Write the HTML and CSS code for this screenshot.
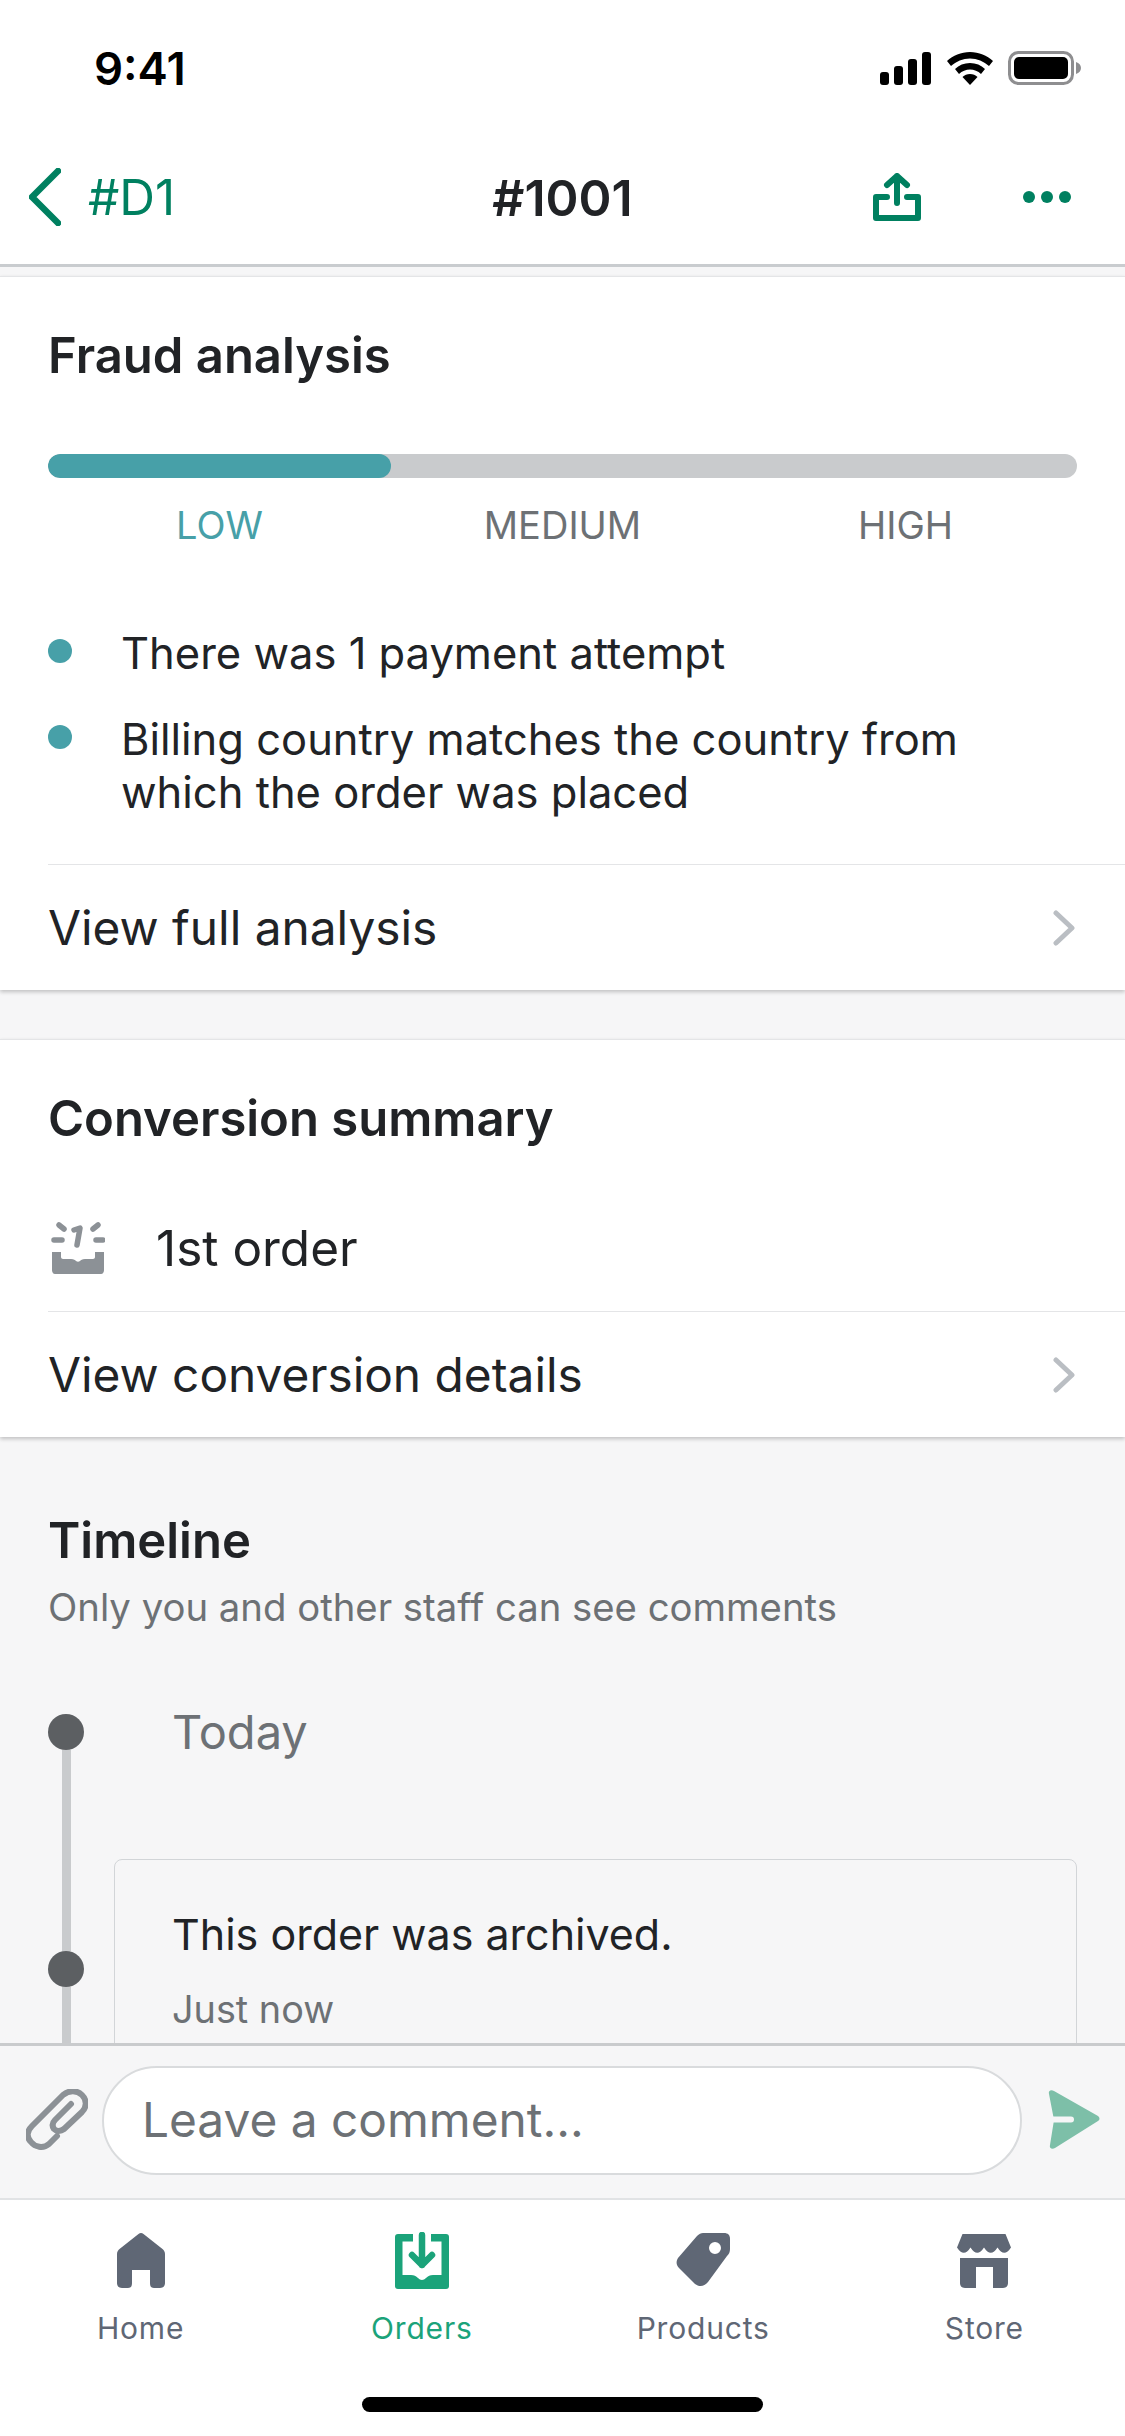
FILE: index.html
```html
<!DOCTYPE html>
<html lang="en">
<head>
  <meta charset="UTF-8">
  <meta name="viewport" content="width=device-width, initial-scale=1.0">
  <title>Order #1001</title>
  <link rel="stylesheet" href="styles.css">
</head>
<body>
  <div class="app">
    <!-- Status bar -->
    <div class="status-bar">
      <span class="time">9:41</span>
      <div class="status-icons">
        <svg width="52" height="33" viewBox="0 0 52 33"><rect x="0" y="20" width="9" height="13" rx="3"/><rect x="14" y="14" width="9" height="19" rx="3"/><rect x="28" y="7" width="9" height="26" rx="3"/><rect x="42" y="0" width="9" height="33" rx="3"/></svg>
        <svg width="46" height="33" viewBox="0 0 46 33"><path d="M23 0c9 0 17 3.500 23 9l-4 5c-5-4.500-12-7.500-19-7.500S9 9.500 4 14L0 9C6 3.500 14 0 23 0z"/><path d="M23 11c6 0 11 2 15 6l-4 5c-3-3-7-4.500-11-4.500S15 19 12 22l-4-5c4-4 9-6 15-6z"/><path d="M23 22c3 0 5.500 1 7.500 3L23 33l-7.500-8c2-2 4.500-3 7.500-3z"/></svg>
        <svg width="74" height="34" viewBox="0 0 74 34"><rect x="1.500" y="1.500" width="63" height="31" rx="9" fill="none" stroke="#8e8e90" stroke-width="3"/><rect x="6" y="6" width="54" height="22" rx="5"/><path d="M68 11c3 1 5 3 5 6s-2 5-5 6z" fill="#8e8e90"/></svg>
      </div>
    </div>

    <!-- Nav bar -->
    <header class="nav-bar">
      <div class="nav-back">
        <svg width="32" height="58" viewBox="0 0 32 58" fill="none" stroke="#008060" stroke-width="6.500" stroke-linecap="round" stroke-linejoin="round"><path d="M29 3L3 29l26 26"/></svg>
        <span>#D1</span>
      </div>
      <h1 class="nav-title">#1001</h1>
      <div class="nav-actions">
        <svg width="48" height="48" viewBox="0 0 48 48" fill="none" stroke="#008060" stroke-width="6" stroke-linecap="round" stroke-linejoin="round"><path d="M24 30V3M14 12l10-9 10 9"/><path d="M14 24H3v21h42V24H34"/></svg>
        <svg width="48" height="12" viewBox="0 0 48 12" fill="#008060"><circle cx="6" cy="6" r="6"/><circle cx="24" cy="6" r="6"/><circle cx="42" cy="6" r="6"/></svg>
      </div>
    </header>

    <main class="content">
      <!-- Fraud analysis -->
      <section class="card">
        <h2 class="card-title">Fraud analysis</h2>
        <div class="risk-bar"><div class="risk-fill"></div></div>
        <div class="risk-labels">
          <span class="risk-active">LOW</span>
          <span>MEDIUM</span>
          <span>HIGH</span>
        </div>
        <ul class="risk-list">
          <li>There was 1 payment attempt</li>
          <li>Billing country matches the country from which the order was placed</li>
        </ul>
        <div class="link-row">
          <span>View full analysis</span>
          <svg class="chevron" width="22" height="36" viewBox="0 0 22 36" fill="none" stroke="#babec3" stroke-width="5" stroke-linecap="round" stroke-linejoin="round"><path d="M3 3l16 15L3 33"/></svg>
        </div>
      </section>

      <!-- Conversion summary -->
      <section class="card card-second">
        <h2 class="card-title">Conversion summary</h2>
        <div class="order-row">
          <svg width="54" height="52" viewBox="0 0 54 52" fill="#8c9196"><path d="M1 30h9v5c0 1 1 2 2 2h8c3 0 4 1 5 2 1.500 1 2.500 1 4 0 1-1 2-2 5-2h8c1 0 2-1 2-2v-5h9v18c0 2-1 4-3 4H4c-2 0-3-2-3-4z"/><g fill="none" stroke="#8c9196" stroke-width="5.500" stroke-linecap="round" stroke-linejoin="round"><path d="M3 18h8M45 18h7M8 3l5 4M47 3l-5 4"/><path d="M23 8l6-2-3 17"/></g></svg>
          <span>1st order</span>
        </div>
        <div class="link-row">
          <span>View conversion details</span>
          <svg class="chevron" width="22" height="36" viewBox="0 0 22 36" fill="none" stroke="#babec3" stroke-width="5" stroke-linecap="round" stroke-linejoin="round"><path d="M3 3l16 15L3 33"/></svg>
        </div>
      </section>

      <!-- Timeline -->
      <section class="timeline">
        <h2 class="card-title">Timeline</h2>
        <p class="timeline-note">Only you and other staff can see comments</p>
        <div class="timeline-body">
          <div class="rail">
            <div class="rail-dot"></div>
            <div class="rail-line rail-line-first"></div>
            <div class="rail-dot"></div>
            <div class="rail-line"></div>
          </div>
          <div class="timeline-events">
            <div class="timeline-day">Today</div>
            <div class="event">
              <div class="event-text">This order was archived.</div>
              <div class="event-time">Just now</div>
            </div>
          </div>
        </div>
      </section>
    </main>

    <!-- Comment box -->
    <div class="composer">
      <svg width="62" height="62" viewBox="27 20 62 62" fill="none" stroke="#8c9196" stroke-width="6" stroke-linecap="round" stroke-linejoin="round"><path d="M58 67l-8 8c-6 5-14 3-18-2-5-5-4-11 1-16l31-31c6-5 14-5 19 0s5 12 0 17L65 60c-4 3-8 2-10 0-2-3-2-6 1-9l16-16"/></svg>
      <div class="comment-input">Leave a comment...</div>
      <svg width="54" height="62" viewBox="19 19 54 62"><path d="M20 24c-1-3 2-5 5-3l44 25c2 1.500 2 4 0 5L26 78c-3 2-6 0-5-3l4-25z" fill="#7dbfa8"/><path d="M23 49.500h19" stroke="#f6f6f7" stroke-width="6" stroke-linecap="round"/></svg>
    </div>

    <!-- Tab bar -->
    <nav class="tab-bar">
      <div class="tab">
        <svg width="48" height="55" viewBox="0 0 48 55" fill="#5f6775"><path d="M21.500 1c1.500-1.300 3.500-1.300 5 0l19 15c1.500 1.200 2.500 3 2.500 5v29c0 3-2 5-5 5h-6c-3 0-4-2-4-5V37H15v13c0 3-1 5-4 5H5c-3 0-5-2-5-5V21c0-2 1-3.800 2.500-5z"/></svg>
        <span>Home</span>
      </div>
      <div class="tab tab-active">
        <svg width="54" height="57" viewBox="0 0 54 57" fill="#1ba37a"><path d="M3 2h15v7.500H7.500V43H16c3 0 5 1 7 3 2.500 2.500 5.500 2.500 8 0 2-2 4-3 7-3h8.500V9.500H36V2h15c2 0 3 1 3 3v49c0 2-1 3-3 3H3c-2 0-3-1-3-3V5c0-2 1-3 3-3z"/><path d="M27 3v30M17 23l10 10 10-10" fill="none" stroke="#1ba37a" stroke-width="6.500" stroke-linecap="round" stroke-linejoin="round"/></svg>
        <span>Orders</span>
      </div>
      <div class="tab">
        <svg width="54" height="55" viewBox="17 14 54 55" fill="#5f6775" fill-rule="evenodd"><path d="M44 14h21c4 0 6 2 6 6v10c0 3-1 5-3 7L49 63c-4 5-9 5-13 2L20 49c-3-3-3-7-1-10l19-22c2-2 4-3 6-3zM56 23a6 6 0 1 0 0 12 6 6 0 0 0 0-12z"/></svg>
        <span>Products</span>
      </div>
      <div class="tab">
        <svg width="54" height="55" viewBox="0 0 54 55" fill="#5f6775"><path d="M5.500 1h43L54 14.500Q47.250 25 40.500 14.500 33.750 25 27 14.500 20.250 25 13.500 14.500 6.750 25 0 14.500z"/><path d="M3 25h48v25c0 3-2 5-5 5H36V34H19v21H8c-3 0-5-2-5-5z"/></svg>
        <span>Store</span>
      </div>
      <div class="home-indicator"></div>
    </nav>
  </div>
</body>
</html>
```
FILE: styles.css
```css
/* General Styles */
* {
  box-sizing: border-box;
}

body {
  margin: 0;
  background: #ffffff;
  color: #212326;
  font-family: Inter, "Liberation Sans", sans-serif;
}

.app {
  display: flex;
  flex-direction: column;
  width: 1125px;
  height: 2436px;
  overflow: hidden;
}

/* Status bar */
.status-bar {
  display: flex;
  justify-content: space-between;
  align-items: center;
  height: 136px;
  padding: 0 43px 0 94px;
  flex-shrink: 0;
}

.time {
  font-size: 45.5px;
  font-weight: 600;
  color: #000000;
}

.status-icons {
  display: flex;
  align-items: center;
  gap: 15px;
}

/* Nav bar */
.nav-bar {
  display: grid;
  grid-template-columns: 1fr auto 1fr;
  align-items: center;
  height: 131px;
  padding: 0 54px 7px 29px;
  border-bottom: 3px solid #c9cccf;
  flex-shrink: 0;
}

.nav-back {
  display: flex;
  align-items: center;
  gap: 27px;
  font-size: 49.5px;
  color: #008060;
}

.nav-title {
  margin: 2px 0 0;
  padding-left: 25px;
  font-size: 50px;
  font-weight: 600;
}

.nav-actions {
  display: flex;
  justify-content: flex-end;
  align-items: center;
  gap: 102px;
}

/* Scrolling content */
.content {
  flex: 1;
  min-height: 0;
  overflow: hidden;
  padding-top: 9px;
  background: #f6f6f7;
}

.card {
  background: #ffffff;
  border-top: 1px solid #e4e5e7;
  box-shadow: 0 2px 4px rgba(0, 0, 0, 0.22);
  padding-left: 48px;
}

.card-second {
  margin-top: 49px;
}

.card-title {
  margin: 0;
  padding-top: 49px;
  font-size: 49px;
  line-height: 60px;
  font-weight: 600;
}

/* Risk meter */
.risk-bar {
  width: 1029px;
  height: 24px;
  margin-top: 68px;
  border-radius: 12px;
  background: #c9cbcd;
  overflow: hidden;
}

.risk-fill {
  width: 343px;
  height: 100%;
  border-radius: 12px;
  background: #47a0a8;
}

.risk-labels {
  display: grid;
  grid-template-columns: repeat(3, 343px);
  margin-top: 23px;
  font-size: 38px;
  line-height: 48px;
  text-align: center;
  color: #6d7175;
}

.risk-active {
  color: #47a0a8;
}

.risk-list {
  list-style: none;
  width: 1029px;
  margin: 78px 0 45px;
  padding: 0;
  font-size: 43.5px;
  line-height: 53px;
}

.risk-list li {
  position: relative;
  padding-left: 73px;
}

.risk-list li + li {
  margin-top: 33px;
}

.risk-list li::before {
  content: "";
  position: absolute;
  left: 0;
  top: 12px;
  width: 24px;
  height: 24px;
  border-radius: 50%;
  background: #47a0a8;
}

.link-row {
  display: flex;
  justify-content: space-between;
  align-items: center;
  height: 126px;
  padding-right: 50px;
  border-top: 1px solid #e4e5e7;
  font-size: 47.8px;
}

.order-row {
  display: flex;
  align-items: center;
  gap: 51px;
  height: 162px;
  padding: 36px 0 0 3px;
  font-size: 49.5px;
}

.chevron {
  flex-shrink: 0;
}

/* Timeline */
.timeline {
  padding: 25px 48px 0;
}

.timeline-note {
  margin: 11px 0 0;
  font-size: 38.3px;
  line-height: 50px;
  color: #6d7175;
}

.timeline-body {
  display: flex;
  gap: 30px;
  margin-top: 82px;
}

.rail {
  display: flex;
  flex-direction: column;
  align-items: center;
  width: 36px;
  flex-shrink: 0;
}

.rail-dot {
  width: 36px;
  height: 36px;
  border-radius: 50%;
  background: #5c5f62;
  flex-shrink: 0;
}

.rail-line {
  flex: 1;
  width: 9px;
  background: #c9cbcd;
}

.rail-line-first {
  flex: none;
  height: 201px;
}

.timeline-events {
  flex: 1;
}

.timeline-day {
  padding-left: 58px;
  font-size: 47px;
  line-height: 36px;
  color: #6d7175;
}

.event {
  margin-top: 109px;
  padding: 47px 57px 60px;
  border: 1px solid #d2d5d8;
  border-radius: 8px;
}

.event-text {
  font-size: 43px;
  line-height: 54px;
}

.event-time {
  margin-top: 23px;
  font-size: 37.8px;
  line-height: 50px;
  color: #6d7175;
}

/* Comment box */
.composer {
  display: flex;
  align-items: center;
  justify-content: space-between;
  height: 157px;
  padding: 0 23px 4px 26px;
  background: #f6f6f7;
  border-top: 3px solid #c9cbcd;
  border-bottom: 2px solid #e1e3e5;
  flex-shrink: 0;
}

.comment-input {
  display: flex;
  align-items: center;
  width: 920px;
  height: 109px;
  padding-left: 38px;
  margin-left: 14px;
  margin-right: 26px;
  background: #ffffff;
  border: 2px solid #d9dbdd;
  border-radius: 55px;
  font-size: 47.8px;
  color: #6d7175;
}

/* Tab bar */
.tab-bar {
  position: relative;
  display: grid;
  grid-template-columns: repeat(4, 1fr);
  height: 236px;
  padding-top: 32px;
  background: #ffffff;
  flex-shrink: 0;
}

.tab {
  display: flex;
  flex-direction: column;
  align-items: center;
  font-size: 30px;
  letter-spacing: 0.8px;
  color: #5f6775;
}

.tab svg {
  height: 57px;
}

.tab span {
  margin-top: 19px;
  line-height: 40px;
}

.tab-active {
  color: #1ba37a;
}

.home-indicator {
  position: absolute;
  left: 362px;
  bottom: 24px;
  width: 401px;
  height: 15px;
  border-radius: 8px;
  background: #000000;
}
```
